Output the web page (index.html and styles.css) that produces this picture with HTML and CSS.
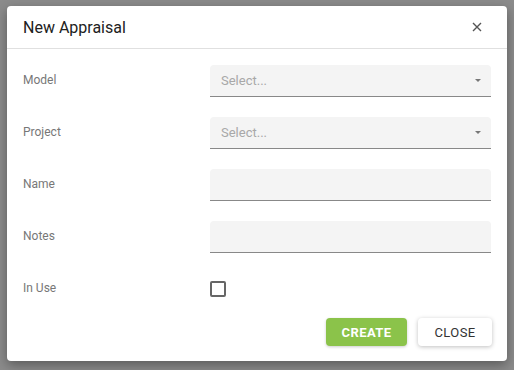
FILE: index.html
```html
<!DOCTYPE html>
<html lang="en">
<head>
    <meta charset="UTF-8">
    <meta name="viewport" content="width=device-width, initial-scale=1.0">
    <link rel="stylesheet" href="styles.css">
    <title>New Appraisal</title>
</head>
<body>

<div class="dialog">
    <div class="dialog-header">
        <h2>New Appraisal</h2>
        <button class="close-x" aria-label="Close">
            <svg width="10" height="10" viewBox="0 0 10 10">
                <path d="M1 1L9 9M9 1L1 9" stroke="#555" stroke-width="1.4" fill="none"/>
            </svg>
        </button>
    </div>

    <div class="dialog-body">
        <div class="row">
            <label>Model</label>
            <div class="field select"><span class="placeholder">Select...</span><span class="caret"></span></div>
        </div>
        <div class="row">
            <label>Project</label>
            <div class="field select"><span class="placeholder">Select...</span><span class="caret"></span></div>
        </div>
        <div class="row">
            <label>Name</label>
            <div class="field"></div>
        </div>
        <div class="row">
            <label>Notes</label>
            <div class="field"></div>
        </div>
        <div class="row">
            <label>In Use</label>
            <div class="checkbox"></div>
        </div>
    </div>

    <div class="dialog-actions">
        <button class="btn btn-create">CREATE</button>
        <button class="btn btn-close">CLOSE</button>
    </div>
</div>

</body>
</html>
```

FILE: styles.css
```css
body {
    margin: 0;
    background-color: #8b8b8b;
    font-family: Roboto, 'Liberation Sans', sans-serif;
    height: 370px;
    overflow: hidden;
}

.dialog {
    width: 500px;
    margin: 6px 0 0 7px;
    background-color: #fff;
    border-radius: 4px;
    box-shadow: 0 4px 12px rgba(0, 0, 0, 0.35);
}

.dialog-header {
    height: 42px;
    display: flex;
    align-items: center;
    justify-content: space-between;
    padding: 0 16px;
    border-bottom: 1px solid #e0e0e0;
}

.dialog-header h2 {
    margin: 0;
    font-size: 16px;
    font-weight: 400;
    color: #212121;
}

.close-x {
    border: none;
    background: none;
    padding: 0;
    margin-right: 9px;
    display: flex;
    cursor: pointer;
}

.dialog-body {
    display: flex;
    flex-direction: column;
    gap: 20px;
    padding: 16px 16px 13px 16px;
}

.row {
    display: flex;
    align-items: center;
    height: 32px;
}

.row label {
    width: 187px;
    font-size: 12px;
    color: #777;
    margin-top: -2px;
}

.field {
    width: 281px;
    height: 32px;
    background-color: #f4f4f4;
    border-radius: 4px 4px 0 0;
    border-bottom: 1px solid #888;
    display: flex;
    align-items: center;
    justify-content: space-between;
    padding: 0 11px;
    box-sizing: border-box;
}

.placeholder {
    font-size: 13px;
    color: #a8a8a8;
}

.caret {
    width: 0;
    height: 0;
    border-left: 3.5px solid transparent;
    border-right: 3.5px solid transparent;
    border-top: 3.5px solid #777;
    margin-right: -1px;
}

.checkbox {
    width: 16px;
    height: 16px;
    box-sizing: border-box;
    border: 2px solid #666;
    border-radius: 2px;
}

.dialog-actions {
    display: flex;
    justify-content: flex-end;
    gap: 11px;
    padding: 0 15px 15px 16px;
}

.btn {
    height: 28px;
    font-family: Roboto, 'Liberation Sans', sans-serif;
    font-size: 13px;
    letter-spacing: 0.4px;
    border: none;
    border-radius: 4px;
    cursor: pointer;
}

.btn-create {
    width: 81px;
    background-color: #8bc34a;
    color: #fff;
    font-weight: 700;
    box-shadow: 0 1px 3px rgba(0, 0, 0, 0.2);
}

.btn-close {
    width: 74px;
    background-color: #fff;
    color: #333;
    font-weight: 400;
    box-shadow: 0 1px 4px rgba(0, 0, 0, 0.25);
}
```
